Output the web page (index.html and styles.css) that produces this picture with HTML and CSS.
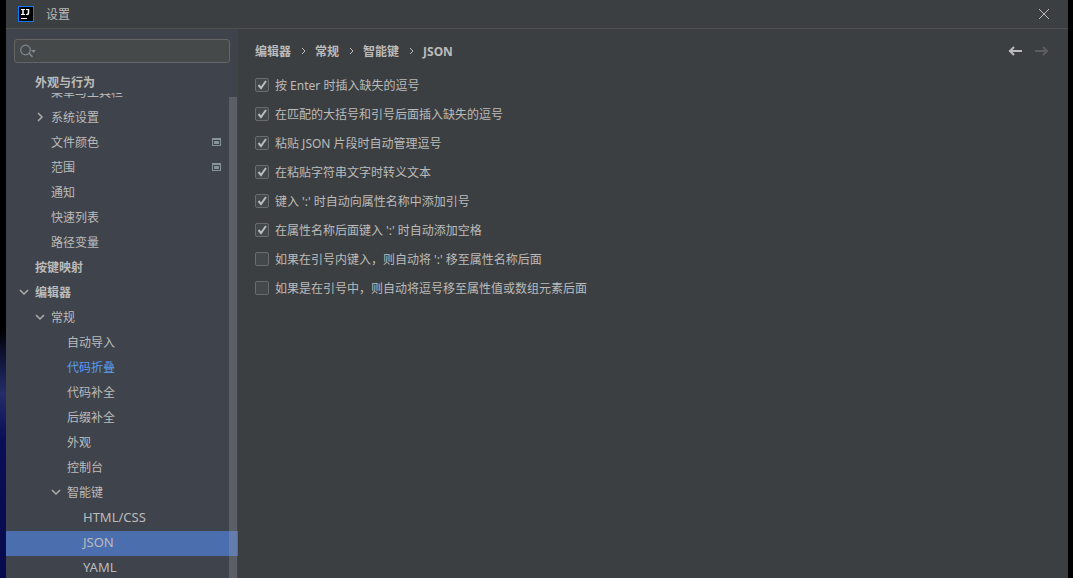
FILE: index.html
```html
<!DOCTYPE html>
<html lang="zh-CN">
<head>
  <meta charset="UTF-8">
  <meta name="viewport" content="width=device-width, initial-scale=1.0">
  <title>设置</title>
  <link rel="stylesheet" href="styles.css">
</head>
<body>
  <div class="window">
    <header class="titlebar">
      <svg class="logo" width="16" height="16" viewBox="0 0 16 16">
        <rect x="0.5" y="0.5" width="15" height="15" fill="#000" stroke="#087cfa"/>
        <path d="M3 3.500h4M3 8.500h4M8 3.500h3M8 8.500h2" fill="none" stroke="#fff"/>
        <path d="M5 3v6M10.500 3v4q0 1.500-1.500 1.500" fill="none" stroke="#fff" stroke-width="1.500"/>
        <path d="M3 12.500h6" stroke="#fff"/>
      </svg>
      <h1>设置</h1>
      <button class="icon-btn close" aria-label="关闭">
        <svg width="12" height="12" viewBox="0 0 12 12"><path d="M1 1l10 10M11 1L1 11" fill="none" stroke="#bbb"/></svg>
      </button>
    </header>

    <div class="body">
      <aside class="sidebar">
        <label class="search">
          <svg width="18" height="14" viewBox="0 0 18 14">
            <circle cx="5.500" cy="6" r="4.800" fill="none" stroke="#7f8b91" stroke-width="1.200"/>
            <path d="M9 9l3.500 4" stroke="#7f8b91" stroke-width="1.500"/>
            <path d="M11 6h5l-2.500 3z" fill="#7f8b91"/>
          </svg>
          <input type="text" aria-label="搜索">
        </label>

        <nav class="tree">
          <a href="#" class="row level-0 pinned">外观与行为</a>
          <div class="rows">
            <a href="#" class="row level-1">菜单与工具栏</a>
            <a href="#" class="row level-1"><svg class="arrow" width="10" height="10" viewBox="0 0 10 10"><path d="M3 1l4 4-4 4"/></svg>系统设置</a>
            <a href="#" class="row level-1">文件颜色<svg class="project" width="9" height="8" viewBox="0 0 9 8"><path d="M0 0h9v8H0zM1 2v5h7V2zM2 3h5v3H2z"/></svg></a>
            <a href="#" class="row level-1">范围<svg class="project" width="9" height="8" viewBox="0 0 9 8"><path d="M0 0h9v8H0zM1 2v5h7V2zM2 3h5v3H2z"/></svg></a>
            <a href="#" class="row level-1">通知</a>
            <a href="#" class="row level-1">快速列表</a>
            <a href="#" class="row level-1">路径变量</a>
            <a href="#" class="row level-0">按键映射</a>
            <a href="#" class="row level-0"><svg class="arrow" width="10" height="10" viewBox="0 0 10 10"><path d="M1 3l4 4 4-4"/></svg>编辑器</a>
            <a href="#" class="row level-1"><svg class="arrow" width="10" height="10" viewBox="0 0 10 10"><path d="M1 3l4 4 4-4"/></svg>常规</a>
            <a href="#" class="row level-2">自动导入</a>
            <a href="#" class="row level-2 modified">代码折叠</a>
            <a href="#" class="row level-2">代码补全</a>
            <a href="#" class="row level-2">后缀补全</a>
            <a href="#" class="row level-2">外观</a>
            <a href="#" class="row level-2">控制台</a>
            <a href="#" class="row level-2"><svg class="arrow" width="10" height="10" viewBox="0 0 10 10"><path d="M1 3l4 4 4-4"/></svg>智能键</a>
            <a href="#" class="row level-3">HTML/CSS</a>
            <a href="#" class="row level-3 selected">JSON</a>
            <a href="#" class="row level-3">YAML</a>
          </div>
          <div class="scrollbar"></div>
        </nav>
      </aside>

      <main class="content">
        <div class="toolbar">
          <nav class="breadcrumb">
            <a href="#">编辑器</a>
            <svg width="6" height="8" viewBox="0 0 6 8"><path d="M2 1l3 3-3 3"/></svg>
            <a href="#">常规</a>
            <svg width="6" height="8" viewBox="0 0 6 8"><path d="M2 1l3 3-3 3"/></svg>
            <a href="#">智能键</a>
            <svg width="6" height="8" viewBox="0 0 6 8"><path d="M2 1l3 3-3 3"/></svg>
            <a href="#" class="current">JSON</a>
          </nav>
          <div class="history">
            <button class="icon-btn" aria-label="后退">
              <svg width="14" height="10" viewBox="0 0 14 10"><path d="M1 5h13M6 1L2 5l4 4" fill="none" stroke="#bbb" stroke-width="2"/></svg>
            </button>
            <button class="icon-btn" aria-label="前进" disabled>
              <svg width="14" height="10" viewBox="0 0 14 10"><path d="M0 5h13M8 1l4 4-4 4" fill="none" stroke="#5b5d5f" stroke-width="2"/></svg>
            </button>
          </div>
        </div>

        <form class="options">
          <label><input type="checkbox" checked>按 Enter 时插入缺失的逗号</label>
          <label><input type="checkbox" checked>在匹配的大括号和引号后面插入缺失的逗号</label>
          <label><input type="checkbox" checked>粘贴 JSON 片段时自动管理逗号</label>
          <label><input type="checkbox" checked>在粘贴字符串文字时转义文本</label>
          <label><input type="checkbox" checked>键入 ':' 时自动向属性名称中添加引号</label>
          <label><input type="checkbox" checked>在属性名称后面键入 ':' 时自动添加空格</label>
          <label><input type="checkbox">如果在引号内键入，则自动将 ':' 移至属性名称后面</label>
          <label><input type="checkbox">如果是在引号中，则自动将逗号移至属性值或数组元素后面</label>
        </form>
      </main>
    </div>
  </div>
</body>
</html>
```
FILE: styles.css
```css
* {
  box-sizing: border-box;
}
body {
  margin: 0;
  height: 100vh;
  padding: 0 5px 0 6px;
  overflow: hidden;
  background: linear-gradient(#000 57%, #10143a 62%, #252d68 68%, #0a0e58 76%, #070a4a) left / 6px 100% no-repeat #000;
  color: #bbb;
  font-family: "Noto Sans", "Noto Sans CJK SC", sans-serif;
  font-size: 12px;
}
a {
  color: inherit;
  text-decoration: none;
}
svg {
  flex: none;
}

.window {
  display: flex;
  flex-direction: column;
  height: 100%;
  background: #3c3f41;
}
.titlebar {
  display: flex;
  align-items: center;
  gap: 12px;
  height: 29px;
  flex: none;
  padding: 0 18px 0 12px;
  border-bottom: 1px solid #515151;
}
.titlebar h1 {
  margin: 0;
  font-size: 12px;
  font-weight: normal;
}
.icon-btn {
  display: flex;
  padding: 0;
  border: none;
  background: none;
}
.close {
  margin-left: auto;
}
.body {
  display: flex;
  flex: 1;
  min-height: 0;
}

/* left side: search and settings tree */
.sidebar {
  display: flex;
  flex-direction: column;
  width: 232px;
  flex: none;
  background: #3f434b;
}
.search {
  display: flex;
  align-items: center;
  height: 24px;
  flex: none;
  margin: 10px 8px 6px;
  padding-left: 5px;
  background: #45494a;
  border: 1px solid #646464;
  border-radius: 3px;
}
.search input {
  flex: 1;
  min-width: 0;
  border: none;
  outline: none;
  background: none;
  color: #bbb;
  font: inherit;
}
.tree {
  position: relative;
  flex: 1;
  min-height: 0;
  overflow: hidden;
}
.rows {
  margin-top: -12px;
}
.row {
  display: flex;
  align-items: center;
  height: 25px;
  padding-right: 17px;
  padding-bottom: 3px;
  white-space: nowrap;
}
.pinned {
  position: relative;
  z-index: 1;
  height: 24px;
  padding-top: 2px;
  padding-bottom: 0;
  background: #3f434b;
}
.level-0 {
  padding-left: 29px;
  font-weight: bold;
}
.level-1 {
  padding-left: 45px;
}
.level-2 {
  padding-left: 61px;
}
.level-3 {
  padding-left: 77px;
  font-size: 13px;
}
.modified {
  color: #589df6;
}
.selected {
  background: #4b6eaf;
}
.arrow {
  margin: 0 6px 0 -16px;
  fill: none;
  stroke: #adadad;
  stroke-width: 1.5;
}
.project {
  margin-left: auto;
  fill: #87939a;
  fill-rule: evenodd;
}
.scrollbar {
  position: absolute;
  top: 28px;
  right: 1px;
  bottom: 0;
  width: 8px;
  background: rgba(166, 166, 166, 0.28);
}

/* right side: page content */
.content {
  flex: 1;
  min-width: 0;
  padding: 12px 19px 0 17px;
}
.toolbar {
  display: flex;
  align-items: center;
  justify-content: space-between;
  height: 20px;
}
.breadcrumb {
  display: flex;
  align-items: center;
  gap: 9px;
  font-weight: bold;
}
.breadcrumb svg {
  fill: none;
  stroke: #bbb;
}
.history {
  display: flex;
  gap: 13px;
}
.options {
  display: flex;
  flex-direction: column;
  align-items: flex-start;
  gap: 9px;
  margin-top: 14px;
}
.options label {
  display: flex;
  align-items: center;
  gap: 6px;
  height: 20px;
}
.options input {
  appearance: none;
  width: 14px;
  height: 14px;
  flex: none;
  margin: 0;
  border: 1px solid #6b6b6b;
  border-radius: 2px;
  background: #43494a;
}
.options input:checked {
  background: #43494a url("data:image/svg+xml,%3Csvg xmlns='http://www.w3.org/2000/svg' viewBox='0 0 12 12'%3E%3Cpath d='M2.500 6l2.500 3 5-7' fill='none' stroke='%23bbb' stroke-width='2'/%3E%3C/svg%3E") center / 12px no-repeat;
}
```
